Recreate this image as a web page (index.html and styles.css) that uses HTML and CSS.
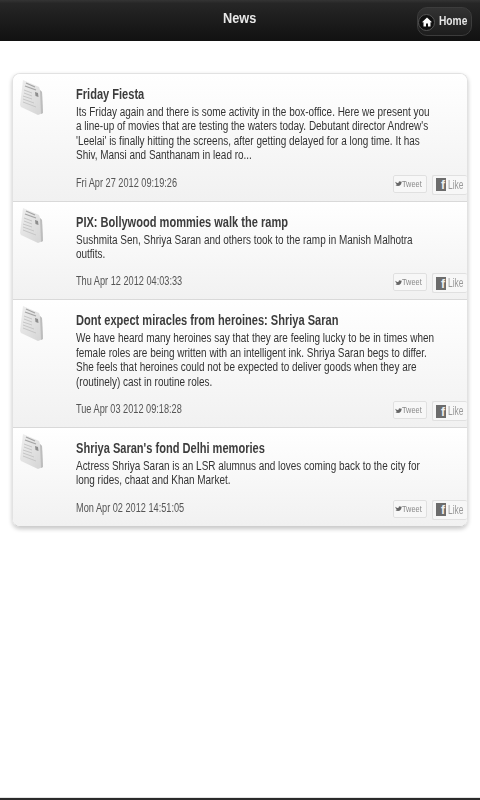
FILE: index.html
```html
<!DOCTYPE html>
<html lang="en">
<head>
<meta charset="utf-8">
<title>News</title>
<link rel="stylesheet" href="styles.css">
</head>
<body>
<svg class="defs" width="0" height="0" aria-hidden="true">
  <defs>
    <linearGradient id="paper" x1="0" y1="0" x2="1" y2="1">
      <stop offset="0" stop-color="#efefef"/>
      <stop offset="1" stop-color="#d4d4d4"/>
    </linearGradient>
    <symbol id="news" viewBox="0 0 23 35">
      <path d="M3 0 L19 7 L20 10 L22 12 L23 33 L18 35 L1 27 L0 25 Z" fill="url(#paper)"/>
      <path d="M6 3 L15 7 M5 6 L16 10" stroke="#a4a4a4" stroke-width="1.300" fill="none"/>
      <path d="M4 10 L12 13 M4 13 L12 16 M3 16 L12 19 M3 19 L14 23 M3 22 L16 27" stroke="#c6c6c6" stroke-width="1" fill="none"/>
      <path d="M15 12 L18 13 L18.500 17 L15.500 16 Z" fill="#8e8e8e"/>
      <path d="M20 10 L22 12 L23 33 L21 34 Z" fill="#bdbdbd"/>
    </symbol>
    <symbol id="bird" viewBox="0 0 16 12">
      <path d="M1 2 C3 4 5 5 8 5 C8 3 9 1 11 1 C12 1 13 1.500 13.500 2 L15.500 1.500 L14.500 3 L16 2.800 L14.700 4 C14.700 8 11.500 11.500 7 11.500 C4.500 11.500 2.500 11 1 10 C3 10 4.500 9.700 5.500 9 C3.500 8.800 2.500 7.800 2 6.500 L3.500 6.500 C2 5.800 1 4.500 1 3.500 Z" fill="#666"/>
    </symbol>
  </defs>
</svg>

<header class="topbar">
  <h1 class="topbar-title">News</h1>
  <a class="home-btn">
    <span class="home-icon">
      <svg width="10" height="10" viewBox="0 0 10 10"><path d="M5 0.500 L10 5.300 L8.500 5.300 L8.500 9.500 L6 9.500 L6 6.500 L4 6.500 L4 9.500 L1.500 9.500 L1.500 5.300 L0 5.300 Z" fill="#fff"/></svg>
    </span>
    <span class="home-label">Home</span>
  </a>
</header>

<main class="content">
  <section class="card">
    <article class="item item-first">
      <svg class="item-icon" width="23" height="35"><use href="#news"/></svg>
      <div class="item-body">
        <h2 class="item-title">Friday Fiesta</h2>
        <p class="item-text">Its Friday again and there is some activity in the box-office. Here we present you<br>a line-up of movies that are testing the waters today. Debutant director Andrew's<br>'Leelai' is finally hitting the screens, after getting delayed for a long time. It has<br>Shiv, Mansi and Santhanam in lead ro...</p>
        <div class="item-foot">
          <time class="item-date">Fri Apr 27 2012 09:19:26</time>
          <div class="social">
            <span class="tweet"><svg width="11" height="9"><use href="#bird"/></svg><span class="tweet-label">Tweet</span></span>
            <span class="like"><span class="fb">f</span><span class="like-label">Like</span></span>
          </div>
        </div>
      </div>
    </article>
    <article class="item">
      <svg class="item-icon" width="23" height="35"><use href="#news"/></svg>
      <div class="item-body">
        <h2 class="item-title">PIX: Bollywood mommies walk the ramp</h2>
        <p class="item-text">Sushmita Sen, Shriya Saran and others took to the ramp in Manish Malhotra<br>outfits.</p>
        <div class="item-foot">
          <time class="item-date">Thu Apr 12 2012 04:03:33</time>
          <div class="social">
            <span class="tweet"><svg width="11" height="9"><use href="#bird"/></svg><span class="tweet-label">Tweet</span></span>
            <span class="like"><span class="fb">f</span><span class="like-label">Like</span></span>
          </div>
        </div>
      </div>
    </article>
    <article class="item">
      <svg class="item-icon" width="23" height="35"><use href="#news"/></svg>
      <div class="item-body">
        <h2 class="item-title">Dont expect miracles from heroines: Shriya Saran</h2>
        <p class="item-text">We have heard many heroines say that they are feeling lucky to be in times when<br>female roles are being written with an intelligent ink. Shriya Saran begs to differ.<br>She feels that heroines could not be expected to deliver goods when they are<br>(routinely) cast in routine roles.</p>
        <div class="item-foot">
          <time class="item-date">Tue Apr 03 2012 09:18:28</time>
          <div class="social">
            <span class="tweet"><svg width="11" height="9"><use href="#bird"/></svg><span class="tweet-label">Tweet</span></span>
            <span class="like"><span class="fb">f</span><span class="like-label">Like</span></span>
          </div>
        </div>
      </div>
    </article>
    <article class="item">
      <svg class="item-icon" width="23" height="35"><use href="#news"/></svg>
      <div class="item-body">
        <h2 class="item-title">Shriya Saran's fond Delhi memories</h2>
        <p class="item-text">Actress Shriya Saran is an LSR alumnus and loves coming back to the city for<br>long rides, chaat and Khan Market.</p>
        <div class="item-foot">
          <time class="item-date">Mon Apr 02 2012 14:51:05</time>
          <div class="social">
            <span class="tweet"><svg width="11" height="9"><use href="#bird"/></svg><span class="tweet-label">Tweet</span></span>
            <span class="like"><span class="fb">f</span><span class="like-label">Like</span></span>
          </div>
        </div>
      </div>
    </article>
  </section>
</main>

<footer class="bottombar"></footer>
</body>
</html>
```

FILE: styles.css
```css
* { box-sizing: border-box; }
html, body { height: 100%; }
body {
  margin: 0;
  display: flex;
  flex-direction: column;
  height: 800px;
  overflow: hidden;
  background: #fff;
  font-family: "Liberation Sans", Arial, sans-serif;
  color: #444;
}
.defs { position: absolute; }

.topbar {
  height: 41px;
  flex: none;
  display: flex;
  align-items: center;
  justify-content: center;
  background: linear-gradient(#343434 0, #262626 8%, #111 100%);
  position: relative;
}
.topbar-title {
  margin: -7px 0 0;
  color: #e8e8e8;
  font-size: 15px;
  font-weight: 700;
  transform: scaleX(.85);
  filter: blur(.3px);
}
.home-btn {
  position: absolute;
  top: 7px;
  right: 8px;
  width: 55px;
  height: 29px;
  display: flex;
  align-items: center;
  gap: 4px;
  border-radius: 10px;
  background: linear-gradient(#333, #1d1d1d);
  border: 1px solid #3c3c3c;
  color: #e6e6e6;
  font-size: 12px;
  font-weight: 700;
  filter: blur(.3px);
}
.home-icon {
  width: 17px;
  height: 17px;
  flex: none;
  margin-top: 1px;
  display: flex;
  align-items: center;
  justify-content: center;
  border-radius: 50%;
  background: #111;
  border: 1px solid #555;
}
.home-label { margin-top: -2px; transform: scaleX(.85); transform-origin: left center; }

.content {
  flex: 1;
  padding: 32px 12px 0;
}
.card {
  border-radius: 8px;
  border: 1px solid #e2e2e2;
  border-bottom-color: #cfcfcf;
  box-shadow: 0 2px 4px rgba(0, 0, 0, .22);
  overflow: hidden;
}
.item {
  display: flex;
  background: linear-gradient(#fff, #f1f1f1);
  border-top: 1px solid #d9d9d9;
  padding: 7px 0 6px 7px;
}
.item-first { border-top: 0; }
.item-icon { flex: none; margin: -1px 33px 0 0; filter: blur(.5px); }
.item-body { flex: 1; min-width: 0; }
.item-title {
  margin: 4px 0 2px;
  font-size: 14px;
  line-height: 18px;
  font-weight: 700;
  color: #3c3c3c;
  white-space: nowrap;
  transform: scaleX(.79);
  transform-origin: left center;
  filter: blur(.3px);
}
.item-text {
  margin: 0;
  font-size: 12px;
  line-height: 14.400px;
  color: #333;
  white-space: nowrap;
  transform: scaleX(.83);
  transform-origin: left center;
  filter: blur(.3px);
}
.item-foot {
  margin-top: 12px;
  display: flex;
  justify-content: space-between;
  align-items: flex-start;
}
.item-date {
  font-size: 12px;
  line-height: 16px;
  color: #555;
  white-space: nowrap;
  transform: scaleX(.765);
  transform-origin: left center;
  filter: blur(.3px);
}
.social { display: flex; align-items: flex-start; gap: 5px; filter: blur(.4px); }
.tweet, .like {
  display: flex;
  align-items: center;
  border: 1px solid #e0e0e0;
  border-radius: 2px;
  background: #f7f7f7;
}
.tweet { width: 34px; height: 18px; padding-left: 1px; font-size: 9px; color: #888; }
.tweet-label { transform: scaleX(.82); transform-origin: left center; }
.like { width: 35px; height: 20px; padding-left: 3px; font-size: 12px; gap: 2px; border-right: 0; color: #999; }
.like-label { transform: scaleX(.7); transform-origin: left center; }
.fb {
  width: 10px;
  height: 13px;
  flex: none;
  background: #6c6c6c;
  color: #eee;
  font: 700 12px/15px "Liberation Sans", sans-serif;
  text-align: right;
  padding-right: 1px;
  overflow: hidden;
}

.bottombar {
  flex: none;
  height: 3px;
  background: #2b2b2b;
  border-top: 1px solid #e4e4e4;
}
```
